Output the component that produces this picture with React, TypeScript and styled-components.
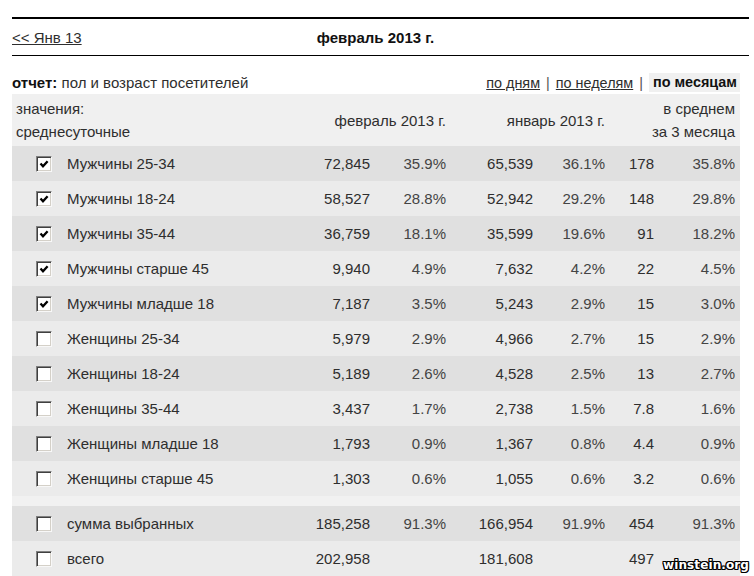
import React from "react";
import styled, { createGlobalStyle } from "styled-components";

const GlobalStyle = createGlobalStyle`
  html, body { margin: 0; padding: 0; background: #ffffff; }
  body { font-family: "Liberation Sans", Arial, sans-serif; font-size: 15px; color: #2e2e2e; }
`;

const Page = styled.div`
  position: relative;
  width: 754px;
  height: 576px;
  overflow: hidden;
  padding: 17px 5px 0 12px;
  box-sizing: border-box;
`;

const NavBar = styled.div`
  display: grid;
  grid-template-columns: 1fr auto 1fr;
  align-items: center;
  height: 36px;
  padding-right: 10px;
  border-top: 2px solid #000000;
  border-bottom: 1px solid #000000;
`;

const BackLink = styled.a`
  color: #2e2e2e;
  text-decoration: underline;
  justify-self: start;
  cursor: pointer;
`;

const Title = styled.div`
  font-weight: bold;
  color: #111111;
`;

const ReportBar = styled.div`
  width: 728px;
  display: flex;
  justify-content: space-between;
  align-items: center;
  margin-top: 17px;
  height: 19px;
  margin-bottom: 2px;
`;

const ReportLabel = styled.div`
  b { color: #111111; }
`;

const Periods = styled.div`
  display: flex;
  align-items: center;
  gap: 6px;
  font-size: 14.4px;
`;

const PeriodLink = styled.a`
  color: #2e2e2e;
  text-decoration: underline;
  cursor: pointer;
`;

const PeriodActive = styled.span`
  font-weight: bold;
  color: #111111;
  background: #f0f0f0;
  padding: 1px 3px 1px 4px;
  line-height: 17px;
`;

const Sep = styled.span`
  color: #555555;
`;

const Table = styled.div`
  width: 728px;
`;

const cols = "55px 195px 108px 76px 87px 72px 49px 81px 5px";

const HeaderRow = styled.div`
  display: grid;
  grid-template-columns: ${cols};
  align-items: center;
  height: 52px;
  background: #f0f0f0;
  line-height: 23px;
`;

const HeaderLabel = styled.div`
  grid-column: 1 / 3;
  padding-left: 4px;
`;

const HeaderCol = styled.div<{ $span: string }>`
  grid-column: ${(p) => p.$span};
  text-align: right;
`;

const Row = styled.div<{ $dark?: boolean }>`
  display: grid;
  grid-template-columns: ${cols};
  align-items: center;
  height: 35px;
  background: ${(p) => (p.$dark ? "#e0e0e0" : "#ebebeb")};
`;

const Spacer = styled.div`
  height: 10px;
  background: #f1f1f1;
`;

const CheckCell = styled.div`
  display: flex;
  align-items: center;
  padding-left: 24px;
`;

const Box = styled.span`
  display: inline-flex;
  align-items: center;
  justify-content: center;
  flex: 0 0 auto;
  width: 16px;
  height: 16px;
  box-sizing: border-box;
  background: #ffffff;
  border-top: 1px solid #808080;
  border-left: 1px solid #808080;
  border-bottom: 1px solid #f8f8f8;
  border-right: 1px solid #f8f8f8;
  box-shadow: inset 1px 1px 0 #404040, inset -1px -1px 0 #d4d0c8;
`;

const Label = styled.div`
  white-space: nowrap;
`;

const Num = styled.div`
  text-align: right;
  white-space: nowrap;
`;

const Pct = styled(Num)`
  color: #444444;
`;

const Watermark = styled.div`
  position: absolute;
  right: 5px;
  bottom: 4px;
  font-family: "DejaVu Sans", Verdana, sans-serif;
  font-weight: bold;
  font-size: 12px;
  color: #ffffff;
  letter-spacing: 0.1px;
  text-shadow: 1px 0 0 #000, -1px 0 0 #000, 0 1px 0 #000, 0 -1px 0 #000,
    1px 1px 0 #000, -1px -1px 0 #000, 1px -1px 0 #000, -1px 1px 0 #000;
`;

function CheckBox({ checked }: { checked?: boolean }) {
  return (
    <Box role="checkbox" aria-checked={!!checked}>
      {checked && (
        <svg width="10" height="10" viewBox="0 0 10 10">
          <polyline points="1.5,4.5 4,7.3 8.6,2.2" fill="none" stroke="#000" strokeWidth="2.3" />
        </svg>
      )}
    </Box>
  );
}

type R = [string, string, string, string, string, string, string, boolean?];

const rows: R[] = [
  ["Мужчины 25-34", "72,845", "35.9%", "65,539", "36.1%", "178", "35.8%", true],
  ["Мужчины 18-24", "58,527", "28.8%", "52,942", "29.2%", "148", "29.8%", true],
  ["Мужчины 35-44", "36,759", "18.1%", "35,599", "19.6%", "91", "18.2%", true],
  ["Мужчины старше 45", "9,940", "4.9%", "7,632", "4.2%", "22", "4.5%", true],
  ["Мужчины младше 18", "7,187", "3.5%", "5,243", "2.9%", "15", "3.0%", true],
  ["Женщины 25-34", "5,979", "2.9%", "4,966", "2.7%", "15", "2.9%"],
  ["Женщины 18-24", "5,189", "2.6%", "4,528", "2.5%", "13", "2.7%"],
  ["Женщины 35-44", "3,437", "1.7%", "2,738", "1.5%", "7.8", "1.6%"],
  ["Женщины младше 18", "1,793", "0.9%", "1,367", "0.8%", "4.4", "0.9%"],
  ["Женщины старше 45", "1,303", "0.6%", "1,055", "0.6%", "3.2", "0.6%"],
];

const sumRow: R = ["сумма выбранных", "185,258", "91.3%", "166,954", "91.9%", "454", "91.3%"];
const totalRow: R = ["всего", "202,958", "", "181,608", "", "497", ""];

function DataRow({ r, dark }: { r: R; dark: boolean }) {
  return (
    <Row $dark={dark}>
      <CheckCell>
        <CheckBox checked={r[7]} />
      </CheckCell>
      <Label>{r[0]}</Label>
      <Num>{r[1]}</Num>
      <Pct>{r[2]}</Pct>
      <Num>{r[3]}</Num>
      <Pct>{r[4]}</Pct>
      <Num>{r[5]}</Num>
      <Pct>{r[6]}</Pct>
      <div />
    </Row>
  );
}

export default function App() {
  return (
    <>
      <GlobalStyle />
      <Page>
        <NavBar>
          <BackLink>&lt;&lt; Янв 13</BackLink>
          <Title>февраль 2013 г.</Title>
          <div />
        </NavBar>
        <ReportBar>
          <ReportLabel>
            <b>отчет:</b> пол и возраст посетителей
          </ReportLabel>
          <Periods>
            <PeriodLink>по дням</PeriodLink>
            <Sep>|</Sep>
            <PeriodLink>по неделям</PeriodLink>
            <Sep>|</Sep>
            <PeriodActive>по месяцам</PeriodActive>
          </Periods>
        </ReportBar>
        <Table>
          <HeaderRow>
            <HeaderLabel>
              значения:
              <br />
              среднесуточные
            </HeaderLabel>
            <HeaderCol $span="3 / 5">февраль 2013 г.</HeaderCol>
            <HeaderCol $span="5 / 7">январь 2013 г.</HeaderCol>
            <HeaderCol $span="7 / 9">
              в среднем
              <br />
              за 3 месяца
            </HeaderCol>
          </HeaderRow>
          {rows.map((r, i) => (
            <DataRow key={r[0]} r={r} dark={i % 2 === 0} />
          ))}
          <Spacer />
          <DataRow r={sumRow} dark />
          <DataRow r={totalRow} dark={false} />
        </Table>
        <Watermark>winstein.org</Watermark>
      </Page>
    </>
  );
}
